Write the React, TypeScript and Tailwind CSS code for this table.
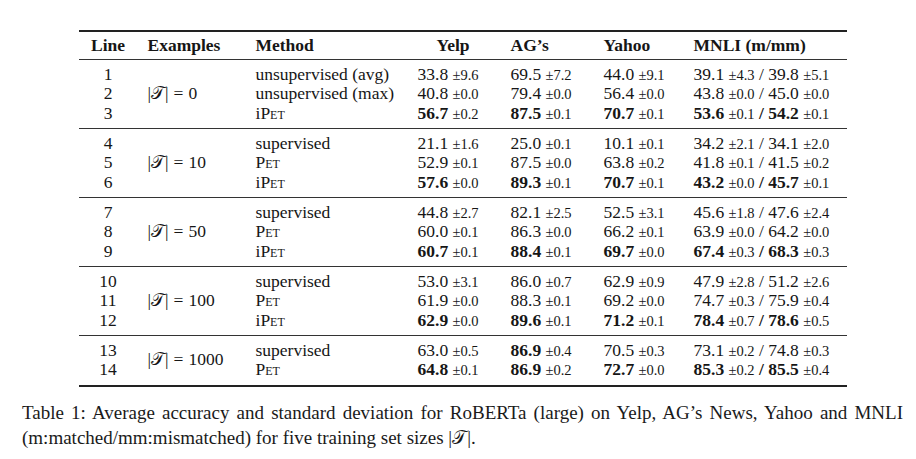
import React from 'react';

type Row = { line: number; method: string; cells: string[] };
type Group = { size: string; rows: Row[] };

// cell format: "value sd" ; a leading * marks the value as bold, MNLI cells hold "a / b"
const groups: Group[] = [
  {
    size: '0',
    rows: [
      { line: 1, method: 'unsupervised (avg)', cells: ['33.8 9.6', '69.5 7.2', '44.0 9.1', '39.1 4.3/39.8 5.1'] },
      { line: 2, method: 'unsupervised (max)', cells: ['40.8 0.0', '79.4 0.0', '56.4 0.0', '43.8 0.0/45.0 0.0'] },
      { line: 3, method: 'iPET', cells: ['*56.7 0.2', '*87.5 0.1', '*70.7 0.1', '*53.6 0.1/*54.2 0.1'] },
    ],
  },
  {
    size: '10',
    rows: [
      { line: 4, method: 'supervised', cells: ['21.1 1.6', '25.0 0.1', '10.1 0.1', '34.2 2.1/34.1 2.0'] },
      { line: 5, method: 'PET', cells: ['52.9 0.1', '87.5 0.0', '63.8 0.2', '41.8 0.1/41.5 0.2'] },
      { line: 6, method: 'iPET', cells: ['*57.6 0.0', '*89.3 0.1', '*70.7 0.1', '*43.2 0.0/*45.7 0.1'] },
    ],
  },
  {
    size: '50',
    rows: [
      { line: 7, method: 'supervised', cells: ['44.8 2.7', '82.1 2.5', '52.5 3.1', '45.6 1.8/47.6 2.4'] },
      { line: 8, method: 'PET', cells: ['60.0 0.1', '86.3 0.0', '66.2 0.1', '63.9 0.0/64.2 0.0'] },
      { line: 9, method: 'iPET', cells: ['*60.7 0.1', '*88.4 0.1', '*69.7 0.0', '*67.4 0.3/*68.3 0.3'] },
    ],
  },
  {
    size: '100',
    rows: [
      { line: 10, method: 'supervised', cells: ['53.0 3.1', '86.0 0.7', '62.9 0.9', '47.9 2.8/51.2 2.6'] },
      { line: 11, method: 'PET', cells: ['61.9 0.0', '88.3 0.1', '69.2 0.0', '74.7 0.3/75.9 0.4'] },
      { line: 12, method: 'iPET', cells: ['*62.9 0.0', '*89.6 0.1', '*71.2 0.1', '*78.4 0.7/*78.6 0.5'] },
    ],
  },
  {
    size: '1000',
    rows: [
      { line: 13, method: 'supervised', cells: ['63.0 0.5', '*86.9 0.4', '70.5 0.3', '73.1 0.2/74.8 0.3'] },
      { line: 14, method: 'PET', cells: ['*64.8 0.1', '*86.9 0.2', '*72.7 0.0', '*85.3 0.2/*85.5 0.4'] },
    ],
  },
];

const cols = 'grid grid-cols-[59px_118px_162px_93px_93px_90px_153px]';

const Calt = () => <span className="font-['DejaVu_Serif','DejaVu_Sans',serif]">𝒯</span>;

const SizeLabel = ({ n }: { n: string }) => (
  <span>
    |<Calt />|<span className="mx-[5px]">=</span>
    {n}
  </span>
);

const Pet = () => <span className="[font-variant-caps:small-caps]">Pet</span>;

const Method = ({ name }: { name: string }) => {
  if (name === 'PET') return <Pet />;
  if (name === 'iPET')
    return (
      <span>
        i<Pet />
      </span>
    );
  return <span>{name}</span>;
};

const Value = ({ text }: { text: string }) => {
  const bold = text.startsWith('*');
  const [v, sd] = text.replace('*', '').split(' ');
  return (
    <span>
      <span className={bold ? 'font-bold' : ''}>{v}</span>{' '}
      <span className="text-[14.5px] leading-none">±{sd}</span>
    </span>
  );
};

const Cell = ({ text }: { text: string }) => {
  if (!text.includes('/')) return <Value text={text} />;
  const [a, b] = text.split('/');
  const bold = a.startsWith('*') && b.startsWith('*');
  return (
    <span>
      <Value text={a} />
      <span className={bold ? 'font-bold' : ''}> / </span>
      <Value text={b} />
    </span>
  );
};

export default function App() {
  return (
    <div className="min-h-screen w-[916px] bg-white pt-[30px] text-[#161616] font-['Liberation_Serif','Times_New_Roman',serif]">
      <div className="ml-[22px] w-[881px]">
        <div className="mx-auto w-[768px] text-[17.5px]">
          <div className="border-t-2 border-[#222]" />
          <div className={`${cols} h-[27px] items-center font-bold`}>
            <div className="text-center">Line</div>
            <div className="pl-[10px]">Examples</div>
            <div>Method</div>
            <div className="pl-[19px]">Yelp</div>
            <div>AG’s</div>
            <div>Yahoo</div>
            <div>MNLI (m/mm)</div>
          </div>
          {groups.map((g) => (
            <div key={g.size} className="border-t border-[#333] pt-[4.5px] pb-[5px]">
              <div className={`${cols} auto-rows-[19.5px] leading-[19.5px]`}>
                {g.rows.map((r, i) => (
                  <React.Fragment key={r.line}>
                    <div className="text-center">{r.line}</div>
                    {i === 0 && (
                      <div
                        className={`col-start-2 pl-[10px] self-center ${g.rows.length === 3 ? 'row-span-3' : 'row-span-2'}`}
                      >
                        <SizeLabel n={g.size} />
                      </div>
                    )}
                    <div className="col-start-3">
                      <Method name={r.method} />
                    </div>
                    {r.cells.map((c, j) => (
                      <div key={j} className="whitespace-nowrap">
                        <Cell text={c} />
                      </div>
                    ))}
                  </React.Fragment>
                ))}
              </div>
            </div>
          ))}
          <div className="border-t-2 border-[#222]" />
        </div>

        <div className="mt-[13px] text-[19px] leading-[25px] text-[#1a1a1a]">
          <div className="text-justify [text-align-last:justify] whitespace-nowrap">
            Table 1: Average accuracy and standard deviation for RoBERTa (large) on Yelp, AG’s News, Yahoo and MNLI
          </div>
          <div>
            (m:matched/mm:mismatched) for five training set sizes |<Calt />|.
          </div>
        </div>
      </div>
    </div>
  );
}
